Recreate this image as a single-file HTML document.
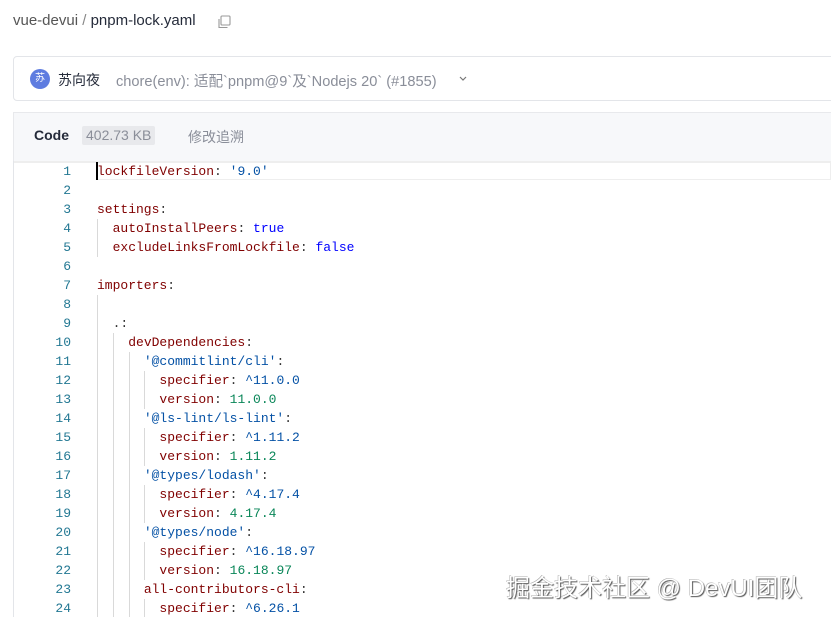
<!DOCTYPE html>
<html><head><meta charset="utf-8"><style>
body{margin:0;width:831px;height:617px;overflow:hidden;background:#fff;font-family:"Liberation Sans","Noto Sans CJK SC",sans-serif;position:relative}
.abs{position:absolute}
.code{font-family:"Liberation Mono",monospace;font-size:13px;line-height:19px;white-space:pre}
.k{color:#800000}.s{color:#0451a5}.b{color:#0000ff}.n{color:#098658}.p{color:#333}
.ln{position:absolute;left:20px;width:51px;text-align:right;color:#237893}
.g{position:absolute;width:1px;background:#d9d9d9}
</style></head><body>
<div class="abs" style="left:13px;top:12px;font-size:15px;color:#555">vue-devui<span style="color:#888"> / </span><span style="color:#252b3a">pnpm-lock.yaml</span></div>
<svg class="abs" style="left:217px;top:15px" width="14" height="14" viewBox="0 0 14 14" fill="none" stroke="#999" stroke-width="1.1"><rect x="4" y="1" width="9" height="9" rx="1"/><path d="M2 4v8.5h8.5"/></svg>
<div class="abs" style="left:13px;top:56px;width:830px;height:45px;border:1px solid #e3e5e9;border-radius:4px;box-sizing:border-box"></div>
<div class="abs" style="left:30px;top:69px;width:20px;height:20px;border-radius:50%;background:#5e7ce0;color:#fff;font-size:10px;text-align:center;line-height:20px">苏</div>
<div class="abs" style="left:58px;top:70px;font-size:14px;color:#252b3a">苏向夜</div>
<div class="abs" style="left:116px;top:70px;font-size:14.6px;color:#8a8e99">chore(env): 适配`pnpm@9`及`Nodejs 20` (#1855)</div>
<svg class="abs" style="left:458px;top:75px" width="10" height="8" viewBox="0 0 10 8" fill="none" stroke="#777" stroke-width="1.2"><path d="M2 2l3 3 3-3"/></svg>
<div class="abs" style="left:13px;top:112px;width:830px;height:49px;background:#f7f8fa;border:1px solid #e8e9ec;border-bottom:none;box-sizing:border-box"></div>
<div class="abs" style="left:34px;top:127px;font-size:14px;font-weight:bold;color:#252b3a">Code</div>
<div class="abs" style="left:82px;top:126px;padding:0 4px;height:19px;line-height:19px;background:#e8e9ec;border-radius:2px;font-size:14px;color:#8a8e99">402.73 KB</div>
<div class="abs" style="left:188px;top:127px;font-size:14px;color:#8a8e99">修改追溯</div>
<div class="abs" style="left:13px;top:161px;width:1px;height:456px;background:#e3e5e9"></div>
<div class="abs" style="left:14px;top:161px;width:817px;height:2px;background:#eee"></div>
<div class="abs" style="left:97px;top:162px;width:734px;height:18px;border:1px solid #eee;border-left:none;box-sizing:border-box"></div>
<div class="abs" style="left:96px;top:162px;width:2px;height:18px;background:#000"></div>
<div class="g" style="left:97px;top:219px;height:38px"></div>
<div class="g" style="left:97px;top:295px;height:322px"></div>
<div class="g" style="left:113px;top:333px;height:284px"></div>
<div class="g" style="left:129px;top:352px;height:265px"></div>
<div class="g" style="left:144px;top:371px;height:38px"></div>
<div class="g" style="left:144px;top:428px;height:38px"></div>
<div class="g" style="left:144px;top:485px;height:38px"></div>
<div class="g" style="left:144px;top:542px;height:38px"></div>
<div class="g" style="left:144px;top:599px;height:18px"></div>
<div class="abs code" style="left:0;top:162px;width:831px;height:456px"><div class="ln" style="top:0">1
2
3
4
5
6
7
8
9
10
11
12
13
14
15
16
17
18
19
20
21
22
23
24</div><div style="position:absolute;left:97px;top:0"><span class="k">lockfileVersion</span><span class="p">: </span><span class="s">'9.0'</span>

<span class="k">settings</span><span class="p">:</span>
  <span class="k">autoInstallPeers</span><span class="p">: </span><span class="b">true</span>
  <span class="k">excludeLinksFromLockfile</span><span class="p">: </span><span class="b">false</span>

<span class="k">importers</span><span class="p">:</span>

  <span class="p">.:</span>
    <span class="k">devDependencies</span><span class="p">:</span>
      <span class="s">'@commitlint/cli'</span><span class="p">:</span>
        <span class="k">specifier</span><span class="p">: </span><span class="s">^11.0.0</span>
        <span class="k">version</span><span class="p">: </span><span class="n">11.0.0</span>
      <span class="s">'@ls-lint/ls-lint'</span><span class="p">:</span>
        <span class="k">specifier</span><span class="p">: </span><span class="s">^1.11.2</span>
        <span class="k">version</span><span class="p">: </span><span class="n">1.11.2</span>
      <span class="s">'@types/lodash'</span><span class="p">:</span>
        <span class="k">specifier</span><span class="p">: </span><span class="s">^4.17.4</span>
        <span class="k">version</span><span class="p">: </span><span class="n">4.17.4</span>
      <span class="s">'@types/node'</span><span class="p">:</span>
        <span class="k">specifier</span><span class="p">: </span><span class="s">^16.18.97</span>
        <span class="k">version</span><span class="p">: </span><span class="n">16.18.97</span>
      <span class="k">all-contributors-cli</span><span class="p">:</span>
        <span class="k">specifier</span><span class="p">: </span><span class="s">^6.26.1</span></div></div>
<div class="abs" style="left:506px;top:568px;font-size:24px;color:#fff;text-shadow:1px 1px 1px #555,-0.5px -0.5px 0 #aaa;white-space:nowrap">掘金技术社区 @ DevUI团队</div>
</body></html>
